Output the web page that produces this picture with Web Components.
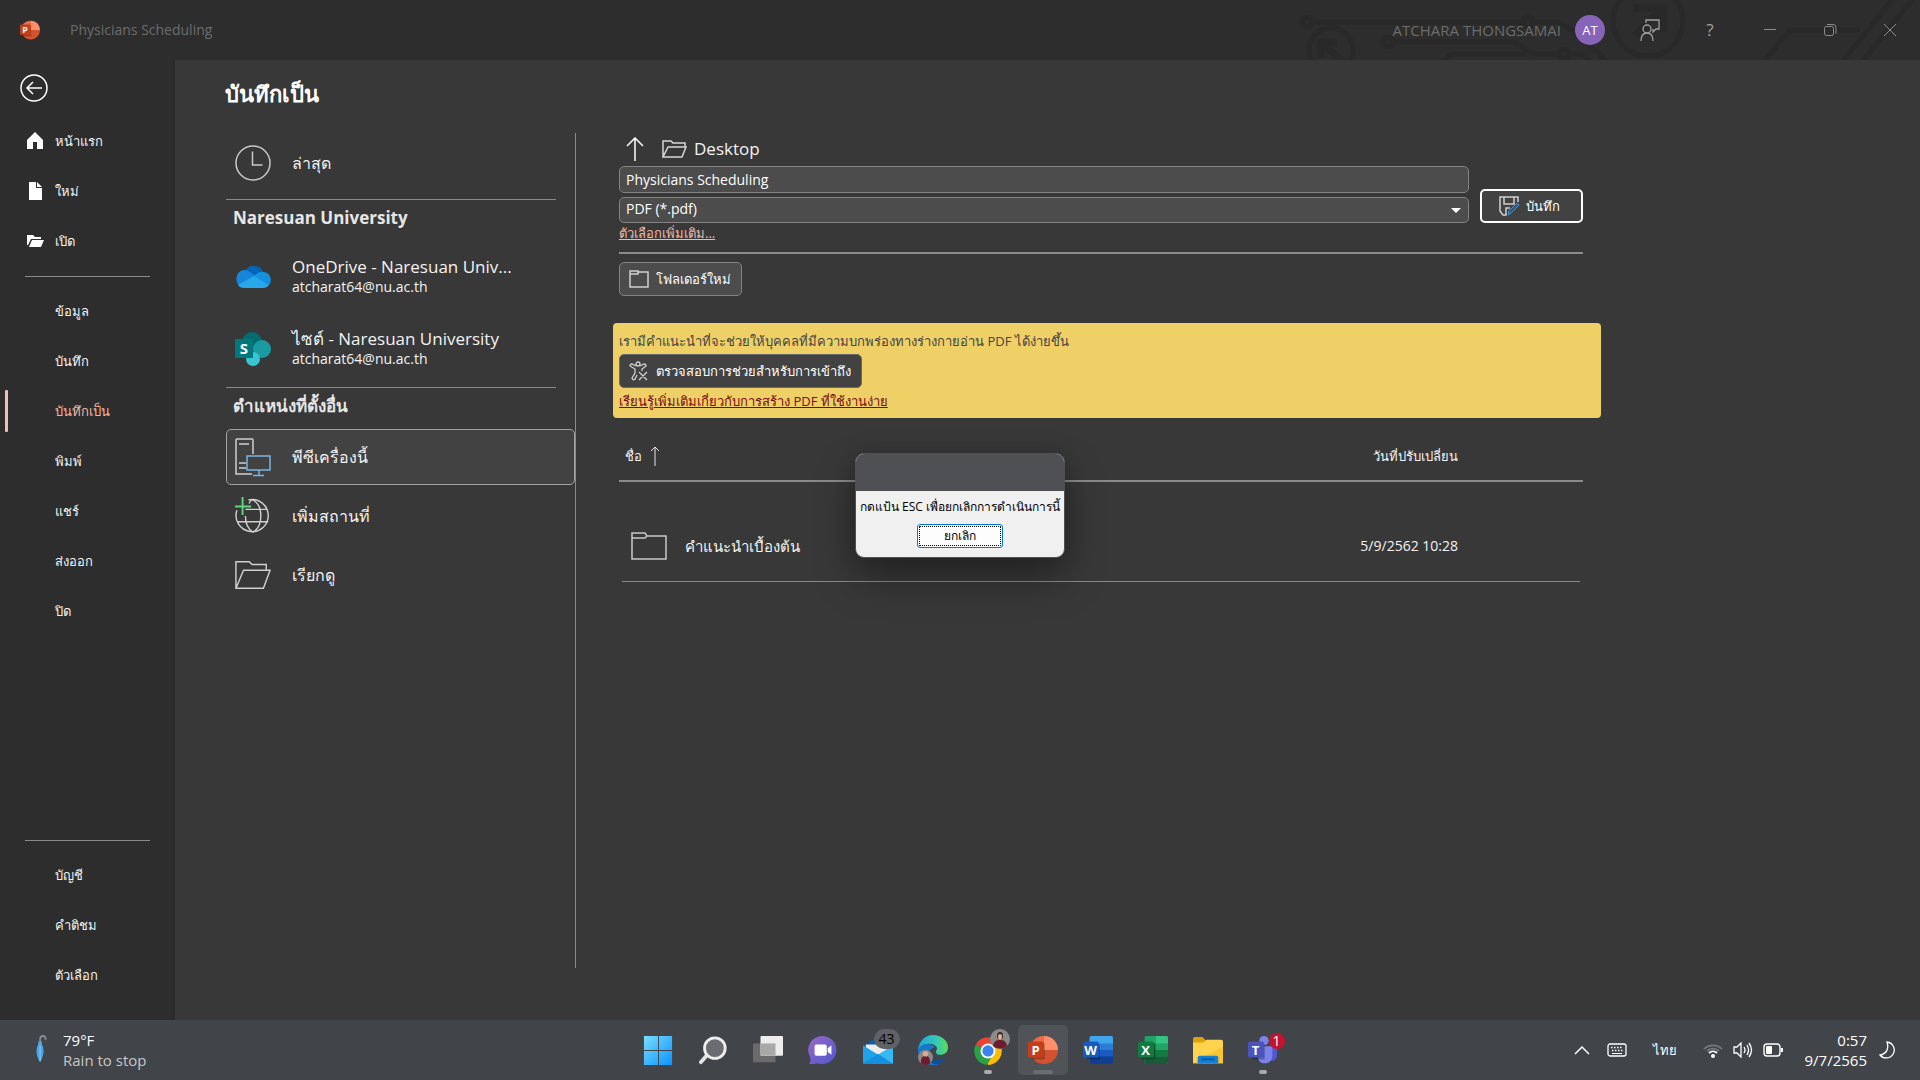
<!DOCTYPE html>
<html lang="th">
<head>
<meta charset="utf-8">
<title>Physicians Scheduling</title>
<style>
    html, body{
        margin: 0;
        height: 100%;
        background: #2d2d2d;
    }
    body{
        font-family: "Open Sans", "Noto Sans", sans-serif;
        font-size: 13px;
        line-height: 20px;
        color: #f3f3f3;
    }
</style>
</head>
<body>
<backstage-app></backstage-app>

<script>
const icons = {
    powerpoint: ['0 0 32 32', `
        <circle cx="17" cy="16" r="15" fill="#d35230"/>
        <path d="M17 1a15 15 0 0 1 15 15H17z" fill="#ff8f6b"/>
        <path d="M17 1v15H2A15 15 0 0 1 17 1z" fill="#ed6c47"/>
        <rect x="4" y="9" width="14" height="17" rx="1" fill="#000" opacity=".25"/>
        <rect x="0" y="7" width="17" height="17" rx="2" fill="#c43e1c"/>
        <text x="8" y="21" font-size="14" font-weight="700" fill="#fff" text-anchor="middle">P</text>`],
    word: ['0 0 32 32', `
        <rect x="7" y="1" width="25" height="30" rx="2" fill="#2b7cd3"/>
        <path d="M7 3a2 2 0 0 1 2-2h21a2 2 0 0 1 2 2v6H7z" fill="#41a5ee"/>
        <path d="M7 16h25v8H7z" fill="#185abd"/>
        <path d="M7 23h25v6a2 2 0 0 1-2 2H9a2 2 0 0 1-2-2z" fill="#103f91"/>
        <rect x="4" y="9" width="14" height="17" rx="1" fill="#000" opacity=".25"/>
        <rect x="0" y="7" width="17" height="17" rx="2" fill="#185abd"/>
        <text x="8" y="21" font-size="14" font-weight="700" fill="#fff" text-anchor="middle">W</text>`],
    excel: ['0 0 32 32', `
        <rect x="7" y="1" width="25" height="30" rx="2" fill="#21a366"/>
        <path d="M19 1h11a2 2 0 0 1 2 2v6H19z" fill="#33c481"/>
        <path d="M7 9h12v8H7z" fill="#107c41"/>
        <path d="M19 16h13v7H19z" fill="#107c41"/>
        <path d="M7 16h12v7h13v6a2 2 0 0 1-2 2H9a2 2 0 0 1-2-2z" fill="#185c37"/>
        <rect x="4" y="9" width="14" height="17" rx="1" fill="#000" opacity=".25"/>
        <rect x="0" y="7" width="17" height="17" rx="2" fill="#107c41"/>
        <text x="8" y="21" font-size="14" font-weight="700" fill="#fff" text-anchor="middle">X</text>`],
    teams: ['0 0 32 32', `
        <circle cx="17" cy="6" r="5" fill="#7b83eb"/>
        <circle cx="27" cy="7" r="4" fill="#5059c9"/>
        <path d="M22 12h9v10a6 6 0 0 1-9 5z" fill="#5059c9"/>
        <path d="M11 12h15v11a8 8 0 0 1-15 3z" fill="#7b83eb"/>
        <rect x="4" y="9" width="14" height="17" rx="1" fill="#000" opacity=".25"/>
        <rect x="0" y="7" width="17" height="17" rx="2" fill="#4b53bc"/>
        <text x="8" y="21" font-size="14" font-weight="700" fill="#fff" text-anchor="middle">T</text>`],
    windows: ['0 0 32 32', `
        <defs><linearGradient id="w" x1="0" y1="0" x2="1" y2="1"><stop stop-color="#7adcff"/><stop offset="1" stop-color="#0a94ff"/></linearGradient></defs>
        <path d="M1 1h15v15H1zM17 1h14v15H17zM1 17h15v15H1zM17 17h14v15H17z" fill="url(#w)"/>`],
    search: ['0 0 32 32', `
        <path d="M10 21 3 29" stroke="#e4e4e4" stroke-width="4" stroke-linecap="round"/>
        <circle cx="18" cy="14" r="11" fill="#6a6c6f" stroke="#eee" stroke-width="3"/>`],
    taskview: ['0 0 32 32', `
        <rect x="0" y="9" width="24" height="20" rx="1" fill="#6b6b6b"/>
        <rect x="8" y="1" width="24" height="21" rx="1" fill="#ededed"/>
        <path d="M8 9h16v13H8z" fill="#a9a9a9"/>`],
    chat: ['0 0 32 32', `
        <defs><linearGradient id="c" x1="0" y1="0" x2="1" y2="1"><stop stop-color="#9a68c4"/><stop offset="1" stop-color="#4d58cf"/></linearGradient></defs>
        <path d="M16 1a15 15 0 1 1-6 29c-3 1-6 1-9 1 2-2 2-4 1-8A15 15 0 0 1 16 1z" fill="url(#c)"/>
        <rect x="7" y="10" width="13" height="12" rx="2" fill="#fff"/>
        <path d="m21 14 4-3v10l-4-3z" fill="#fff"/>`],
    mail: ['0 0 32 32', `
        <path d="M0 12 16 1l16 11v4H0z" fill="#0a5bab"/>
        <path d="M3 10h26v8l-13 7-13-7z" fill="#ececec"/>
        <path d="m0 11 16 10L0 31z" fill="#1ea2ea"/>
        <path d="M32 11 16 21l16 10z" fill="#36b8f5"/>
        <path d="m0 31 16-11 16 11z" fill="#1590df"/>`],
    edge: ['0 0 32 32', `
        <defs><linearGradient id="e" x1="0" y1="0" x2="1" y2="0"><stop stop-color="#1fa5dc"/><stop offset=".6" stop-color="#35c7b8"/><stop offset="1" stop-color="#5bdc55"/></linearGradient></defs>
        <path d="M0 16C1 6 8 0 16 0c9 0 16 6 16 13 0 6-4 8-8 8-3 0-5-1-5-3s2-2 1-5c-2-4-13-7-20 3z" fill="url(#e)"/>
        <path d="M0 16c3-8 14-8 18-3-5 1-7 5-6 10 1 6 7 9 11 8-5 2-12 1-16-2-5-4-7-8-7-13z" fill="#1579c9"/>
        <path d="M12 20c2 6 9 8 17 4-2 5-7 8-12 7-4-2-7-6-5-11z" fill="#0f4f94"/>
        <circle cx="8" cy="24" r="8" fill="#8a8886"/>
        <path d="M3 30c0-6 2-8 5-8s5 2 5 8a8 8 0 0 1-10 0z" fill="#6e1d2c"/>
        <circle cx="8" cy="20" r="3" fill="#d8ab95"/>`],
    chrome: ['0 0 32 32', `
        <path d="M16 17 3 10a15 15 0 0 1 26 0z" fill="#ea4335"/>
        <path d="M16 17 29 10a15 15 0 0 1-13 22z" fill="#fbbc04"/>
        <path d="M16 17v1l5 3-6 11A15 15 0 0 1 3 10z" fill="#2c9f47"/>
        <circle cx="16" cy="17" r="8" fill="#fff"/>
        <circle cx="16" cy="17" r="6" fill="#3b82f0"/>`],
    face: ['0 0 20 20', `
        <circle cx="10" cy="10" r="10" fill="#8b8a89"/>
        <path d="M3 17c1-5 3-6 7-6s6 1 7 6a10 10 0 0 1-14 0z" fill="#6e1d2c"/>
        <ellipse cx="10" cy="7" rx="3" ry="4" fill="#3a2723"/>
        <ellipse cx="10" cy="8" rx="2" ry="3" fill="#dcb09b"/>`],
    explorer: ['0 0 32 32', `
        <path d="M0 4a2 2 0 0 1 2-2h8l3 3v5H0z" fill="#e0a008"/>
        <path d="M0 8h11l3-3h16a2 2 0 0 1 2 2v23H0z" fill="#ffd34d"/>
        <path d="M0 30 32 12v18z" fill="#f9c632"/>
        <path d="M5 30v-6a2 2 0 0 1 2-2h18a2 2 0 0 1 2 2v6z" fill="#1580d8"/>
        <path d="M9 26h14" stroke="#0c58a0" stroke-width="2"/>`],
    umbrella: ['0 0 12 32', `
        <path d="M5 8V5q0-4 3-4t3 4" fill="none" stroke="#8a8a8a" stroke-width="2"/>
        <path d="M3 7h4v3c3 6 2 12-2 19-4-7-5-13-2-19z" fill="#4ba6ee"/>
        <path d="M5 11v17" stroke="#8ccaf8"/>`],
    back: ['0 0 28 28', `<g fill="none" stroke="#fff" stroke-width="1.5"><circle cx="14" cy="14" r="13"/><path d="M22 14H7m6-6-6 6 6 6"/></g>`],
    home: ['0 0 18 18', `<path d="M9 0 1 8v9h6v-7h4v7h6V8z" fill="#fff"/>`],
    page: ['0 0 18 18', `<path d="M3 0h7v6h6v12H3z" fill="#fff"/><path d="m11 0 5 5h-5z" fill="#fff"/>`],
    open: ['0 0 18 18', `<path d="M1 3h6l2 2h6v2H5L2 13H1z" fill="#fff"/><path d="M6 8h12l-3 7H3z" fill="#fff"/>`],
    clock: ['0 0 36 36', `<g fill="none" stroke="#c8c8c8" stroke-width="1.5"><circle cx="18" cy="18" r="17"/><path d="M17.5 6.5v13.5h10"/></g>`],
    onedrive: ['0 2 36 36', `
        <path d="M10 14a10 10 0 0 1 18 1l-8 6z" fill="#0364b8"/>
        <path d="M8 13a9 9 0 0 1 7 2l12 8-20 7A9 9 0 0 1 8 13z" fill="#1586dc"/>
        <path d="M20 18q4-4 9-3a8 8 0 0 1 5 13l-16-8z" fill="#1490df"/>
        <path d="m3 28 16-9 15 9q-2 3-6 3H9q-4 0-6-3z" fill="#28a8ea"/>`],
    sharepoint: ['0 0 36 36', `
        <circle cx="17" cy="11" r="10" fill="#036c70"/>
        <circle cx="27" cy="18" r="9" fill="#1a9ba1"/>
        <circle cx="18" cy="28" r="7" fill="#37c6d0"/>
        <rect x="0" y="8" width="18" height="19" rx="1" fill="#03787c"/>
        <text x="9" y="23" font-size="15" font-weight="700" fill="#fff" text-anchor="middle">S</text>`],
    thispc: ['0 0 36 40', `
        <g fill="none" stroke="#d0d0d0" stroke-width="1.5"><path d="M17 37H1V3q0-1 1-1h15q1 0 1 1v14M4 7h10M4 26h7M4 31h7"/></g>
        <g fill="none" stroke="#7ab4e4" stroke-width="1.5"><path d="M12 19h23v14H12zM24 33v5M18 38.5h11"/></g>`],
    globe: ['2 2 38 38', `
        <g fill="none" stroke="#d0d0d0" stroke-width="1.5"><path d="M16 4a17 17 0 1 1-12 11M13 14h23M5 27h32"/><path d="M17 8q1-4 4-4c11 6 11 28 0 34-5-3-8-9-8-17"/></g>
        <path d="M10 1v19M1 11h18" stroke="#5fd67b" stroke-width="2"/>`],
    browse: ['0 0 38 30', `<path d="M1 29V1h14l3 3h15v6M1 29 9 10h28l-7 19z" fill="none" stroke="#d0d0d0" stroke-width="1.5"/>`],
    openfolder: ['0 0 26 18', `<path d="M1 17V1h8l2 2h12v4M1 17 6 7h18l-4 10z" fill="none" stroke="#d6d6d6" stroke-width="1.5"/>`],
    up: ['0 0 18 24', `<path d="M9 24V1M1 9l8-8 8 8" fill="none" stroke="#fff" stroke-width="1.5"/>`],
    sort: ['0 0 10 20', `<path d="M5 20V1M1 5l4-4 4 4" fill="none" stroke="#e6e6e6"/>`],
    folder: ['0 0 36 28', `<path d="M1 27V1h13l2 3h19v23zM1 6h13l2-2" fill="none" stroke="#c8c8c8" stroke-width="1.5"/>`],
    newfolder: ['0 0 20 18', `<path d="M1 17V1h8v1h10v15zM1 4h8V2" fill="none" stroke="#cfcfcf" stroke-width="1.5"/>`],
    save: ['0 0 20 20', `
        <path d="M19 6V1H1v14l3 4h3v-7h4M5 1v7h10V1" fill="none" stroke="#d0d0d0" stroke-width="1.5"/>
        <path d="m9 19 1-4 7-7q2-1 3 1l-8 8z" fill="#1b5c8f" stroke="#3a9be0"/>`],
    access: ['0 0 20 20', `<g fill="none" stroke="#d0d0d0" stroke-width="1.3"><circle cx="9" cy="3" r="2"/><path d="M7 5 3 3q-2 0-2 2l5 3v4l-3 5q1 3 3 1l2-4M11 5l4-2q2 0 2 2l-4 3v2M10 11l8 8M18 11l-8 8"/></g>`],
    feedback: ['0 0 20 22', `<g fill="none" stroke="#a0a0a0" stroke-width="1.3"><circle cx="7" cy="10" r="4"/><path d="M1 22c0-5 2-8 6-8s6 3 6 8M6 4V1h13v9h-3l-3 3v-3"/></g>`],
    minimize: ['0 0 14 14', `<path d="M1 6.5h12" stroke="#8c8c8c"/>`],
    restore: ['0 0 14 14', `<g fill="none" stroke="#8c8c8c"><rect x="1.5" y="3.5" width="9" height="9" rx="2"/><path d="M4 1.5h6q3 0 3 3v6"/></g>`],
    close: ['0 0 14 14', `<path d="m1 1 12 12M13 1 1 13" stroke="#8c8c8c"/>`],
    chevron: ['0 0 16 16', `<path d="m1 12 7-7 7 7" fill="none" stroke="#fff" stroke-width="1.5"/>`],
    keyboard: ['0 0 20 16', `
        <rect x="1" y="2" width="18" height="12" rx="2" fill="none" stroke="#fff" stroke-width="1.3"/>
        <path d="M4 5.5h12M5 8.5h11" stroke="#fff" stroke-width="1.5" stroke-dasharray="1.5 1.5"/><path d="M5 11.5h10" stroke="#fff"/>`],
    wifi: ['0 0 20 16', `
        <g fill="none" stroke-width="1.7"><path d="M1 7a13 13 0 0 1 18 0M4 9a9 9 0 0 1 12 0" stroke="#777a7d"/><path d="M6 11a6 6 0 0 1 8 0" stroke="#fff"/></g>
        <circle cx="10" cy="14" r="2" fill="#fff"/>`],
    volume: ['0 0 20 16', `<g fill="none" stroke="#fff" stroke-width="1.3"><path d="M1 5h3l4-4v14l-4-4H1z"/><path d="M11 5q2 3 0 6M14 3q3 5 0 10M16 1q5 7 0 14"/></g>`],
    battery: ['0 0 20 16', `<rect x="1" y="2" width="16" height="12" rx="3" fill="none" stroke="#fff" stroke-width="1.4"/><rect x="3" y="4" width="6" height="8" rx="1" fill="#fff"/><path d="M19 6v4" stroke="#fff" stroke-width="2"/>`],
    moon: ['0 0 16 18', `<path d="M8 1a8 8 0 1 1-7 13C8 13 10 7 8 1z" fill="none" stroke="#fff" stroke-width="1.3"/>`]
}

/* registers an element whose shadow root is cloned from the given markup */
function register(name, html, setup){
    const template = document.createElement('template');
    template.innerHTML = html;

    window.customElements.define(name, class extends HTMLElement{
        constructor(){
            super();
            this.attachShadow({ mode: 'open' })
            this.shadowRoot.appendChild(template.content.cloneNode(true));
        }

        connectedCallback(){
            if(setup) setup(this, this.shadowRoot);
        }
    });
}

register('ui-icon', `
        <style>
        :host{
            display: inline-block;
            flex: none;
            width: 20px;
            height: 20px;
        }
        svg{
            display: block;
            width: 100%;
            height: 100%;
            font-family: "Open Sans", sans-serif;
        }
        </style>
        <svg aria-hidden="true"></svg>
`, (host, root) => {
    const [box, shapes] = icons[host.getAttribute('name')];
    const svg = root.querySelector('svg');
    svg.setAttribute('viewBox', box);
    svg.innerHTML = shapes;
});

register('title-bar', `
        <style>
        :host{
            display: flex;
            align-items: center;
            position: relative;
            height: 60px;
            padding-left: 20px;
            color: #6c6c6c;
            overflow: hidden;
        }
        .art{
            position: absolute;
            top: 0;
            right: 0;
            width: 640px;
            height: 60px;
        }
        .title{
            flex: 1;
            margin-left: 30px;
            font-size: 14px;
        }
        .user{
            font-size: 15px;
        }
        .tools{
            display: flex;
            align-items: center;
            position: relative;
        }
        .avatar{
            width: 30px;
            height: 30px;
            margin-left: 14px;
            border-radius: 50%;
            background: #8764b8;
            color: #fff;
            line-height: 30px;
            text-align: center;
        }
        button{
            display: grid;
            place-items: center;
            width: 60px;
            height: 60px;
            padding: 0;
            border: 0;
            background: none;
            color: #a0a0a0;
            font: inherit;
            font-size: 17px;
        }
        .window ui-icon{
            width: 14px;
            height: 14px;
        }
        .feedback{
            margin-left: 15px;
        }
        .feedback ui-icon{
            height: 22px;
        }
        </style>
        <svg class="art" viewBox="0 0 640 60" fill="none" stroke="#292929" stroke-width="5" aria-hidden="true">
            <circle cx="27" cy="22" r="5"/><path d="M32 22h211M253 22h25q15 6 60 50"/><circle cx="248" cy="22" r="5"/>
            <circle cx="108" cy="42" r="5"/><path d="M113 42h120l22 12h25"/><circle cx="284" cy="54" r="5"/><path d="M160 62l12-8h75M289 54h12l10 8"/>
            <circle cx="51" cy="50" r="22"/><path d="M41 58V42h16M41 42l22 20" stroke-width="7"/>
            <circle cx="368" cy="21" r="35"/><path d="M353 8h30v24M383 8l-28 28" stroke-width="8"/>
            <path d="m484 62 26-32h70M562 62 612 0M582 62l50-62"/>
        </svg>
        <ui-icon name="powerpoint"></ui-icon>
        <span class="title">Physicians Scheduling</span>
        <div class="tools">
            <span class="user">ATCHARA THONGSAMAI</span>
            <span class="avatar">AT</span>
            <button class="feedback" aria-label="Feedback"><ui-icon name="feedback"></ui-icon></button>
            <button>?</button>
            <button class="window" aria-label="Minimize"><ui-icon name="minimize"></ui-icon></button>
            <button class="window" aria-label="Restore"><ui-icon name="restore"></ui-icon></button>
            <button class="window" aria-label="Close"><ui-icon name="close"></ui-icon></button>
        </div>
`);

register('nav-item', `
        <style>
        :host{
            display: block;
        }
        button{
            display: flex;
            align-items: center;
            gap: 11px;
            position: relative;
            width: 100%;
            height: 50px;
            padding: 0 0 0 26px;
            border: 0;
            background: none;
            color: inherit;
            font: inherit;
            text-align: left;
        }
        .icon{
            display: flex;
            width: 18px;
        }
        ::slotted(ui-icon){
            width: 18px;
            height: 18px;
        }
        :host([selected]) button{
            color: #f0b8a6;
        }
        :host([selected]) button::before{
            content: "";
            position: absolute;
            top: 4px;
            bottom: 4px;
            left: 5px;
            width: 3px;
            border-radius: 1px;
            background: #f4bfae;
        }
        </style>
        <button><span class="icon"><slot name="icon"></slot></span><slot></slot></button>
`);

register('side-nav', `
        <style>
        :host{
            display: flex;
            flex-direction: column;
            width: 175px;
            background: linear-gradient(to right, transparent 171px, #292929);
        }
        .back{
            width: 28px;
            height: 28px;
            margin: 14px 0 14px 20px;
            padding: 0;
            border: 0;
            background: none;
        }
        .back ui-icon{
            display: block;
            width: 28px;
            height: 28px;
        }
        hr{
            width: 125px;
            margin: 10px 25px 9px;
            border: 0;
            border-top: 1px solid #8a8a8a;
        }
        .bottom{
            margin-top: auto;
            padding-bottom: 20px;
        }
        </style>
        <button class="back" aria-label="Back"><ui-icon name="back"></ui-icon></button>
        <nav>
            <nav-item><ui-icon slot="icon" name="home"></ui-icon>หน้าแรก</nav-item>
            <nav-item><ui-icon slot="icon" name="page"></ui-icon>ใหม่</nav-item>
            <nav-item><ui-icon slot="icon" name="open"></ui-icon>เปิด</nav-item>
            <hr>
            <nav-item>ข้อมูล</nav-item>
            <nav-item>บันทึก</nav-item>
            <nav-item selected>บันทึกเป็น</nav-item>
            <nav-item>พิมพ์</nav-item>
            <nav-item>แชร์</nav-item>
            <nav-item>ส่งออก</nav-item>
            <nav-item>ปิด</nav-item>
        </nav>
        <nav class="bottom">
            <hr>
            <nav-item>บัญชี</nav-item>
            <nav-item>คำติชม</nav-item>
            <nav-item>ตัวเลือก</nav-item>
        </nav>
`);

register('place-item', `
        <style>
        :host{
            display: block;
            height: 56px;
        }
        :host([account]){
            height: 72px;
        }
        button{
            display: flex;
            align-items: center;
            gap: 21px;
            box-sizing: border-box;
            width: 100%;
            height: 100%;
            padding: 0 8px;
            border: 1px solid transparent;
            border-radius: 5px;
            background: none;
            color: inherit;
            font: inherit;
            font-size: 16px;
            text-align: left;
        }
        :host([account]) button{
            font-size: 17px;
        }
        :host([selected]) button{
            border-color: #a3a3a3;
            background: #424242;
        }
        ::slotted(ui-icon){
            width: 36px;
            height: 40px;
        }
        ::slotted(small){
            display: block;
            font-size: 14px;
        }
        </style>
        <button><slot name="icon"></slot><span><slot></slot><slot name="detail"></slot></span></button>
`);

register('place-list', `
        <style>
        :host{
            display: block;
            box-sizing: border-box;
            width: 351px;
            padding-left: 1px;
            border-right: 1px solid #8a8a8a;
        }
        hr{
            margin: 2px 19px 0 0;
            border: 0;
            border-top: 1px solid #8a8a8a;
        }
        h2{
            margin: 0 0 5px 7px;
            font-size: 17px;
            line-height: 36px;
            color: #e6e6e6;
        }
        place-item + place-item:not([account]){
            margin-top: 3px;
        }
        .recent{
            height: 60px;
            margin-bottom: 6px;
        }
        </style>
        <place-item class="recent"><ui-icon slot="icon" name="clock"></ui-icon>ล่าสุด</place-item>
        <hr>
        <h2>Naresuan University</h2>
        <place-item account><ui-icon slot="icon" name="onedrive"></ui-icon>OneDrive - Naresuan Univ...<small slot="detail">atcharat64@nu.ac.th</small></place-item>
        <place-item account><ui-icon slot="icon" name="sharepoint"></ui-icon>ไซต์ - Naresuan University<small slot="detail">atcharat64@nu.ac.th</small></place-item>
        <hr>
        <h2>ตำแหน่งที่ตั้งอื่น</h2>
        <place-item selected><ui-icon slot="icon" name="thispc"></ui-icon>พีซีเครื่องนี้</place-item>
        <place-item><ui-icon slot="icon" name="globe"></ui-icon>เพิ่มสถานที่</place-item>
        <place-item><ui-icon slot="icon" name="browse"></ui-icon>เรียกดู</place-item>
`);

register('push-button', `
        <style>
        :host{
            display: inline-block;
        }
        button{
            display: flex;
            align-items: center;
            justify-content: center;
            gap: 7px;
            box-sizing: border-box;
            width: 100%;
            height: 34px;
            padding: 0 10px 0 9px;
            border: 1px solid #838383;
            border-radius: 5px;
            background: #4c4c4c;
            color: #fff;
            font: inherit;
            white-space: nowrap;
        }
        :host([primary]) button{
            padding-right: 13px;
            border: 2px solid #fff;
            background: #424242;
        }
        :host([dark]) button{
            border-color: #6a6a6a;
            background: #424242;
        }
        </style>
        <button><slot></slot></button>
`);

register('save-form', `
        <style>
        :host{
            display: block;
        }
        .path{
            display: flex;
            align-items: center;
            box-sizing: border-box;
            height: 33px;
            padding: 0 0 2px 7px;
            font-size: 17px;
        }
        .path ui-icon{
            width: 18px;
            height: 24px;
            margin-right: 18px;
        }
        .path ui-icon + ui-icon{
            width: 26px;
            height: 18px;
            margin-right: 6px;
        }
        form{
            display: grid;
            grid-template-columns: 1fr 103px;
            column-gap: 11px;
            align-items: end;
        }
        .fields{
            display: grid;
            gap: 4px;
        }
        .type{
            position: relative;
        }
        .type::after{
            content: "";
            position: absolute;
            top: 11px;
            right: 8px;
            border: 5px solid transparent;
            border-top-color: #fff;
            border-bottom: 0;
        }
        input, select{
            display: block;
            appearance: none;
            box-sizing: border-box;
            width: 100%;
            height: 27px;
            padding: 0 6px;
            border: 1px solid #838383;
            border-radius: 5px;
            background: #4c4c4c;
            color: #fff;
            font: inherit;
            font-size: 14px;
        }
        select{
            height: 26px;
            padding-bottom: 2px;
        }
        a{
            display: inline-block;
            line-height: 18px;
            color: #f0b8a6;
        }
        .rule{
            margin: 11px 0 8px;
            border: 0;
            border-top: 2px solid #8a8a8a;
        }
        .options{
            height: 18px;
        }
        </style>
        <div class="path"><ui-icon name="up"></ui-icon><ui-icon name="openfolder"></ui-icon>Desktop</div>
        <form>
            <div class="fields">
                <input aria-label="File name" value="Physicians Scheduling">
                <div class="type"><select aria-label="File type"><option>PDF (*.pdf)</option></select></div>
            </div>
            <push-button primary><ui-icon name="save"></ui-icon>บันทึก</push-button>
        </form>
        <div class="options"><a href="#">ตัวเลือกเพิ่มเติม...</a></div>
        <hr class="rule">
        <push-button><ui-icon name="newfolder"></ui-icon>โฟลเดอร์ใหม่</push-button>
`);

register('access-notice', `
        <style>
        :host{
            display: grid;
            justify-items: start;
            gap: 3px;
            padding: 8px 6px 7px;
            border-radius: 4px;
            background: #eed067;
            color: #444;
        }
        a{
            color: #7a0a18;
        }
        </style>
        <span>เรามีคำแนะนำที่จะช่วยให้บุคคลที่มีความบกพร่องทางร่างกายอ่าน PDF ได้ง่ายขึ้น</span>
        <push-button dark><ui-icon name="access"></ui-icon>ตรวจสอบการช่วยสำหรับการเข้าถึง</push-button>
        <a href="#">เรียนรู้เพิ่มเติมเกี่ยวกับการสร้าง PDF ที่ใช้งานง่าย</a>
`);

register('file-table', `
        <style>
        :host{
            display: block;
        }
        table{
            width: 100%;
            border-spacing: 0;
        }
        th{
            box-sizing: border-box;
            height: 50px;
            padding: 0 6px;
            border-bottom: 2px solid #8a8a8a;
            font-weight: 400;
            text-align: left;
        }
        td{
            box-sizing: border-box;
            height: 100px;
            padding: 28px 12px 0;
            font-size: 14px;
        }
        tbody tr{
            background: linear-gradient(#8a8a8a, #8a8a8a) center bottom / calc(100% - 6px) 1px no-repeat;
        }
        div{
            display: flex;
            align-items: center;
            gap: 8px;
        }
        td div{
            gap: 18px;
            font-size: 15px;
        }
        th ui-icon{
            width: 10px;
        }
        td ui-icon{
            width: 36px;
            height: 30px;
        }
        th:last-child, td:last-child{
            padding-right: 125px;
            text-align: right;
        }
        </style>
        <table>
            <thead><tr><th><div>ชื่อ <ui-icon name="sort"></ui-icon></div></th><th>วันที่ปรับเปลี่ยน</th></tr></thead>
            <tbody><tr><td><div><ui-icon name="folder"></ui-icon>คำแนะนำเบื้องต้น</div></td><td>5/9/2562 10:28</td></tr></tbody>
        </table>
`);

register('wait-dialog', `
        <style>
        :host{
            display: block;
            position: absolute;
            top: 453px;
            left: 50%;
            box-sizing: border-box;
            width: 210px;
            transform: translateX(-50%);
            border: 1px solid #4f5054;
            border-radius: 9px;
            background: #f0f0f0;
            box-shadow: 0 20px 40px rgba(0,0,0,0.35), 0 0 20px rgba(0,0,0,0.15);
            color: #000;
            font-size: 12px;
            text-align: center;
            white-space: nowrap;
            overflow: hidden;
        }
        header{
            height: 37px;
            background: #4f5054;
        }
        p{
            margin: 6px 0 7px;
        }
        button{
            box-sizing: border-box;
            width: 86px;
            height: 24px;
            margin-bottom: 9px;
            padding: 0;
            border: 1px solid #0078d7;
            border-radius: 3px;
            outline: 1px dotted #000;
            outline-offset: -3px;
            background: #fdfdfd;
            color: #000;
            font: inherit;
        }
        </style>
        <header></header>
        <p><slot></slot></p>
        <button>ยกเลิก</button>
`, (host) => {
    host.setAttribute('role', 'dialog');
});

register('task-app', `
        <style>
        :host{
            display: block;
            position: relative;
            width: 50px;
            height: 50px;
        }
        :host([active]){
            border-radius: 5px;
            background: #505357;
        }
        button{
            display: grid;
            place-items: center;
            width: 100%;
            height: 100%;
            padding: 0;
            border: 0;
            background: none;
        }
        button ui-icon{
            width: 30px;
            height: 30px;
        }
        :host([running])::after{
            content: "";
            position: absolute;
            bottom: 1px;
            left: 50%;
            width: 8px;
            height: 4px;
            border-radius: 2px;
            transform: translateX(-50%);
            background: #a8aaac;
        }
        :host([active])::after{
            width: 20px;
            background: #696c70;
        }
        ::slotted(*){
            position: absolute;
            top: 4px;
            right: 3px;
            z-index: 1;
        }
        </style>
        <button></button>
        <slot></slot>
`, (host, root) => {
    const icon = document.createElement('ui-icon');
    const button = root.querySelector('button');
    icon.setAttribute('name', host.getAttribute('app'));
    button.appendChild(icon);
    button.setAttribute('aria-label', host.getAttribute('app'));
});

register('task-bar', `
        <style>
        :host{
            display: grid;
            grid-template-columns: 1fr auto 1fr;
            align-items: center;
            height: 60px;
            background: #414449;
            color: #fff;
        }
        .weather{
            display: flex;
            align-items: center;
            gap: 16px;
            padding-left: 35px;
            font-size: 15px;
        }
        .weather ui-icon{
            width: 12px;
            height: 30px;
        }
        .weather span{
            display: block;
            color: #c8c8c8;
        }
        .apps{
            display: flex;
            gap: 5px;
        }
        .count{
            min-width: 26px;
            height: 20px;
            border-radius: 10px;
            background: #5f6164;
            color: #000;
            font-size: 14px;
            text-align: center;
        }
        .alert{
            min-width: 16px;
            height: 16px;
            margin-top: 4px;
            border-radius: 8px;
            background: #c4122f;
            color: #fff;
            line-height: 16px;
        }
        .tray{
            display: flex;
            align-items: center;
            justify-content: flex-end;
            gap: 10px;
            padding-right: 25px;
        }
        .tray ui-icon{
            height: 16px;
        }
        .tray .chevron{
            margin-right: 5px;
        }
        .language{
            margin: 0 16px;
        }
        .time{
            margin: 0 2px 0 12px;
            font-size: 15px;
            text-align: right;
        }
        .tray ui-icon.moon{
            width: 16px;
            height: 18px;
        }
        </style>
        <div class="weather"><ui-icon name="umbrella"></ui-icon><div>79°F<span>Rain to stop</span></div></div>
        <div class="apps">
            <task-app app="windows"></task-app>
            <task-app app="search"></task-app>
            <task-app app="taskview"></task-app>
            <task-app app="chat"></task-app>
            <task-app app="mail"><span class="count">43</span></task-app>
            <task-app app="edge"></task-app>
            <task-app app="chrome" running><ui-icon name="face"></ui-icon></task-app>
            <task-app app="powerpoint" running active></task-app>
            <task-app app="word"></task-app>
            <task-app app="excel"></task-app>
            <task-app app="explorer"></task-app>
            <task-app app="teams" running><span class="count alert">1</span></task-app>
        </div>
        <div class="tray">
            <ui-icon class="chevron" name="chevron"></ui-icon>
            <ui-icon name="keyboard"></ui-icon>
            <span class="language">ไทย</span>
            <ui-icon name="wifi"></ui-icon>
            <ui-icon name="volume"></ui-icon>
            <ui-icon name="battery"></ui-icon>
            <div class="time">0:57<br>9/7/2565</div>
            <ui-icon class="moon" name="moon"></ui-icon>
        </div>
`);

register('backstage-app', `
        <style>
        :host{
            display: grid;
            grid-template-rows: auto 1fr auto;
            min-height: 100vh;
        }
        .body{
            display: flex;
        }
        main{
            display: flex;
            flex: 1;
            flex-direction: column;
            padding: 0 50px 52px;
            background: #383838;
        }
        h1{
            margin: 0 0 7px;
            font-size: 22px;
            line-height: 66px;
            color: #fff;
        }
        .columns{
            display: flex;
            flex: 1;
            gap: 37px;
        }
        .pane{
            flex: 1;
            max-width: 988px;
        }
        save-form, file-table{
            margin: 0 18px 0 6px;
        }
        access-notice{
            margin: 27px 0 14px;
        }
        </style>
        <title-bar></title-bar>
        <div class="body">
            <side-nav></side-nav>
            <main>
                <h1>บันทึกเป็น</h1>
                <div class="columns">
                    <place-list></place-list>
                    <div class="pane">
                        <save-form></save-form>
                        <access-notice></access-notice>
                        <file-table></file-table>
                    </div>
                </div>
            </main>
        </div>
        <task-bar></task-bar>
        <wait-dialog>กดแป้น ESC เพื่อยกเลิกการดำเนินการนี้</wait-dialog>
`);
</script>
</body>
</html>
